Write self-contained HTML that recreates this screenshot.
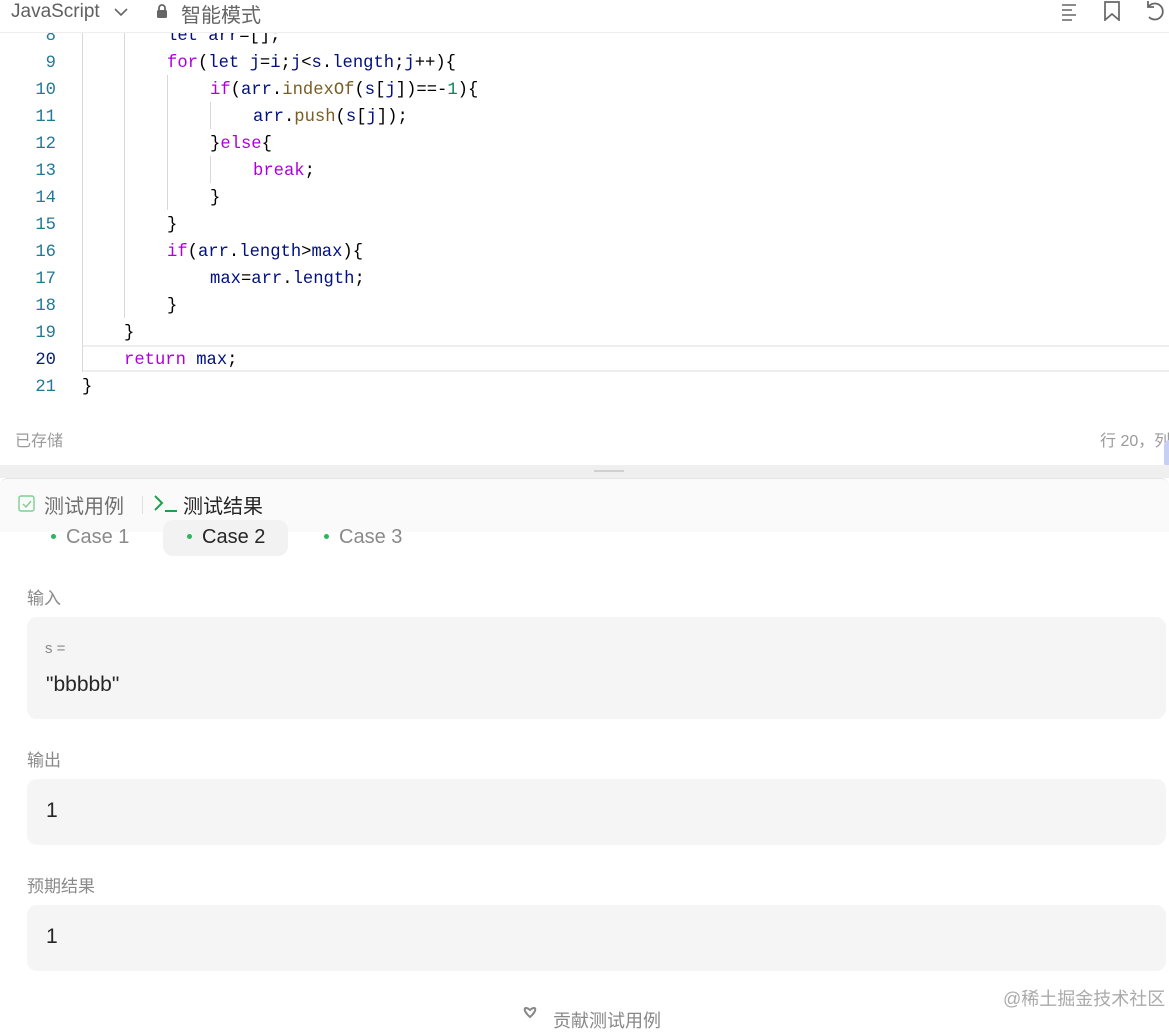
<!DOCTYPE html>
<html><head><meta charset="utf-8"><style>
*{margin:0;padding:0;box-sizing:border-box}
body{width:1169px;height:1014px;overflow:hidden;background:#fff;font-family:"Liberation Sans","Noto Sans CJK SC",sans-serif;position:relative}
.abs{position:absolute}
.code{font-family:"Liberation Mono","DejaVu Sans Mono",monospace;font-size:17.2px;white-space:pre;color:#000;line-height:27px;height:27px}
.ln{position:absolute;width:56px;text-align:right;left:0;font-family:"Liberation Mono",monospace;font-size:17.2px;color:#237893;line-height:27px}
.k{color:#af00db}.v{color:#001080}.f{color:#795e26}.n{color:#098658}.b{color:#001080}
.g{position:absolute;width:1px;background:#d8d8d8}
.lbl{position:absolute;left:27px;font-size:16px;color:#8a8a8a}
.box{position:absolute;left:27px;width:1139px;background:#f5f5f5;border-radius:10px}
.val{position:absolute;left:19px;font-family:"Liberation Sans",sans-serif;font-size:21px;color:#262626}
#c{position:absolute;left:0;top:3px;width:1169px;height:400px}
</style></head><body>
<div id="c">
<div class="abs" style="left:82px;top:342px;width:1087px;height:27px;border-top:2px solid #eee;border-bottom:2px solid #eee"></div>
<div class="g" style="left:82px;top:17px;height:352px"></div>
<div class="g" style="left:124px;top:17px;height:298px"></div>
<div class="g" style="left:167px;top:72px;height:135px"></div>
<div class="g" style="left:210px;top:99px;height:27px"></div>
<div class="g" style="left:210px;top:153px;height:27px"></div>
<div class="ln" style="top:20px">8</div>
<div class="ln" style="top:47px">9</div>
<div class="ln" style="top:74px">10</div>
<div class="ln" style="top:101px">11</div>
<div class="ln" style="top:128px">12</div>
<div class="ln" style="top:155px">13</div>
<div class="ln" style="top:182px">14</div>
<div class="ln" style="top:209px">15</div>
<div class="ln" style="top:236px">16</div>
<div class="ln" style="top:263px">17</div>
<div class="ln" style="top:290px">18</div>
<div class="ln" style="top:317px">19</div>
<div class="ln" style="top:344px;color:#0b216f">20</div>
<div class="ln" style="top:371px">21</div>
<div class="abs code" style="left:167px;top:20px"><span class="b">let</span> <span class="v">arr</span>=[];</div>
<div class="abs code" style="left:167px;top:47px"><span class="k">for</span>(<span class="b">let</span> <span class="v">j</span>=<span class="v">i</span>;<span class="v">j</span>&lt;<span class="v">s</span>.<span class="v">length</span>;<span class="v">j</span>++){</div>
<div class="abs code" style="left:210px;top:74px"><span class="k">if</span>(<span class="v">arr</span>.<span class="f">indexOf</span>(<span class="v">s</span>[<span class="v">j</span>])==-<span class="n">1</span>){</div>
<div class="abs code" style="left:253px;top:101px"><span class="v">arr</span>.<span class="f">push</span>(<span class="v">s</span>[<span class="v">j</span>]);</div>
<div class="abs code" style="left:210px;top:128px">}<span class="k">else</span>{</div>
<div class="abs code" style="left:253px;top:155px"><span class="k">break</span>;</div>
<div class="abs code" style="left:210px;top:182px">}</div>
<div class="abs code" style="left:167px;top:209px">}</div>
<div class="abs code" style="left:167px;top:236px"><span class="k">if</span>(<span class="v">arr</span>.<span class="v">length</span>&gt;<span class="v">max</span>){</div>
<div class="abs code" style="left:210px;top:263px"><span class="v">max</span>=<span class="v">arr</span>.<span class="v">length</span>;</div>
<div class="abs code" style="left:167px;top:290px">}</div>
<div class="abs code" style="left:124px;top:317px">}</div>
<div class="abs code" style="left:124px;top:344px"><span class="k">return</span> <span class="v">max</span>;</div>
<div class="abs code" style="left:82px;top:371px">}</div>
</div>
<div class="abs" style="left:0;top:0;width:1169px;height:33px;background:#fff;border-bottom:1px solid #eee;z-index:3">
<div class="abs" style="left:11px;top:1px;font-size:19px;color:#606060">JavaScript</div>
<svg class="abs" style="left:114px;top:6px" width="14" height="12"><path d="M1 3l6 6 6-6" stroke="#666" stroke-width="1.6" fill="none"/></svg>
<svg class="abs" style="left:156px;top:3px" width="12" height="16"><path d="M3 7V5a3 3 0 0 1 6 0v2" stroke="#666" stroke-width="1.8" fill="none"/><rect x="1" y="7" width="10" height="8" rx="1.5" fill="#666"/></svg>
<div class="abs" style="left:181px;top:-1px;font-size:20px;color:#666">智能模式</div>
<svg class="abs" style="left:1060px;top:2px" width="20" height="20"><path d="M2 3h14M2 8h10M2 13h14M2 18h10" stroke="#666" stroke-width="1.6"/></svg>
<svg class="abs" style="left:1103px;top:1px" width="18" height="20"><path d="M2 1v18l7-6 7 6V1z" stroke="#666" stroke-width="1.7" fill="none"/></svg>
<svg class="abs" style="left:1144px;top:0px" width="22" height="22"><path d="M5 6a8 8 0 1 1 0 11" stroke="#666" stroke-width="1.8" fill="none"/><path d="M4 1v6h6" stroke="#666" stroke-width="1.8" fill="none"/></svg>
</div>
<div class="abs" style="left:15px;top:427px;font-size:16px;color:#9a9a9a">已存储</div>
<div class="abs" style="left:1100px;top:427px;font-size:16px;color:#9a9a9a;white-space:nowrap">行 20，列</div>
<div class="abs" style="left:1164px;top:440px;width:10px;height:28px;border-radius:5px;background:#c8cff5"></div>
<div class="abs" style="left:0;top:465px;width:1169px;height:13px;background:#efefef"></div>
<div class="abs" style="left:594px;top:470px;width:30px;height:2px;background:#d0d0d0"></div>
<div class="abs" style="left:0;top:478px;width:1169px;height:54px;background:#fafafa;border-top:1px solid #e6e6e6;border-radius:8px 8px 0 0"></div>
<svg class="abs" style="left:18px;top:495px" width="18" height="18"><rect x="1" y="1" width="15" height="15" rx="2" stroke="#7ccf92" stroke-width="1.4" fill="none"/><path d="M5 9l3 3 5-6" stroke="#7ccf92" stroke-width="1.4" fill="none"/></svg>
<div class="abs" style="left:44px;top:490px;font-size:20px;color:#707070">测试用例</div>
<div class="abs" style="left:142px;top:496px;width:1px;height:18px;background:#e0e0e0"></div>
<svg class="abs" style="left:153px;top:494px" width="26" height="20"><path d="M2 2l7 7-7 7" stroke="#1ea04a" stroke-width="2" fill="none"/><path d="M12 17h12" stroke="#1ea04a" stroke-width="2"/></svg>
<div class="abs" style="left:183px;top:490px;font-size:20px;color:#262626">测试结果</div>
<div class="abs" style="left:163px;top:520px;width:125px;height:36px;background:#f2f2f2;border-radius:10px"></div>
<div class="abs" style="left:51px;top:534px;width:5px;height:5px;border-radius:50%;background:#2db55d"></div>
<div class="abs" style="left:66px;top:526px;font-size:20px;color:#8a8a8a">Case 1</div>
<div class="abs" style="left:187px;top:534px;width:5px;height:5px;border-radius:50%;background:#2db55d"></div>
<div class="abs" style="left:202px;top:526px;font-size:20px;color:#262626">Case 2</div>
<div class="abs" style="left:324px;top:534px;width:5px;height:5px;border-radius:50%;background:#2db55d"></div>
<div class="abs" style="left:339px;top:526px;font-size:20px;color:#8a8a8a">Case 3</div>
<div class="lbl" style="top:584px;font-size:17px">输入</div>
<div class="box" style="top:617px;height:102px">
<div class="abs" style="left:18px;top:23px;font-size:15px;color:#8a8a8a">s =</div>
<div class="val" style="top:56px">"bbbbb"</div>
</div>
<div class="lbl" style="top:746px;font-size:17px">输出</div>
<div class="box" style="top:779px;height:66px"><div class="val" style="top:20px">1</div></div>
<div class="lbl" style="top:872px;font-size:17px">预期结果</div>
<div class="box" style="top:905px;height:66px"><div class="val" style="top:20px">1</div></div>
<svg class="abs" style="left:518px;top:1007px" width="24" height="12"><path d="M12 10C4 3 6-2 12 3 18-2 20 3 12 10z" stroke="#888" stroke-width="2" fill="none"/></svg>
<div class="abs" style="left:553px;top:1007px;font-size:18px;color:#888">贡献测试用例</div>
<div class="abs" style="left:1003px;top:985px;font-size:18px;color:#aaa">@稀土掘金技术社区</div>
</body></html>
